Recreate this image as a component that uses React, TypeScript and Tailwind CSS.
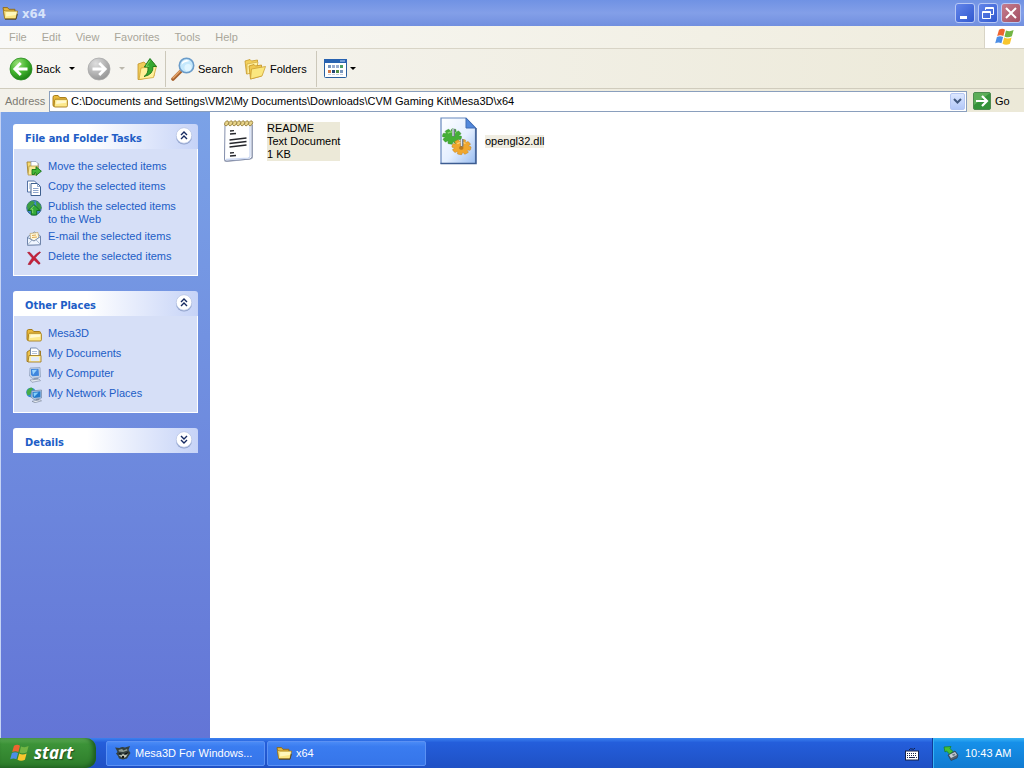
import { useState } from "react";
import type { ReactNode } from "react";

type IconProps = { className?: string };

function FolderIcon({ className = "size-4" }: IconProps) {
  return (
    <svg viewBox="0 0 16 16" className={className} aria-hidden="true">
      <path d="M1 4.5Q1 2.5 2.5 2.5h3.6l1.6 2h5.6q1.2 0 1.2 1.2v7.8H2.4Q1 13.5 1 12z" fill="#e9b93c" stroke="#a0740f" strokeWidth=".9" />
      <path d="M2.600 7.200q.2-1 1.200-1h10.600q1 0 1 1v5.600q0 1.200-1.200 1.200H3q-1 0-.9-1z" fill="#fde98c" stroke="#a87e1b" strokeWidth=".9" />
      <path d="M4 11l.6-3.600h9.600v2.400z" fill="#fff9d2" />
    </svg>
  );
}

function OpenFolderIcon({ className = "size-4" }: IconProps) {
  return (
    <svg viewBox="0 0 16 16" className={className} aria-hidden="true">
      <path d="M1 2.6h4.6l1.300 1.700h6v8.900H2.700z" fill="#e6b83e" stroke="#8a6516" strokeWidth=".9" />
      <path d="M3.800 6h11.800l-1.600 7.700H2.700L1.600 5.200z" fill="#fbe685" stroke="#9a7420" strokeWidth=".7" />
      <path d="M4.200 7h10.400l-.7 3L4 11.500z" fill="#fff7bb" />
      <path d="M3 14.300h11l1.400-5.200" fill="none" stroke="#4d3c16" strokeWidth=".8" />
    </svg>
  );
}

function RoundArrow({ forward = false }: { forward?: boolean }) {
  const id = forward ? "fwd" : "bck";
  return (
    <svg viewBox="0 0 24 24" className="size-6 shrink-0" aria-hidden="true">
      <defs>
        <radialGradient id={id} cx=".35" cy=".25" r=".85">
          <stop offset="0" stopColor={forward ? "#dedede" : "#9be079"} />
          <stop offset=".5" stopColor={forward ? "#b7b7b7" : "#43b52e"} />
          <stop offset="1" stopColor={forward ? "#8e8e8e" : "#147710"} />
        </radialGradient>
      </defs>
      <circle cx="12" cy="12" r="11" fill={`url(#${id})`} stroke={forward ? "#aaa" : "#2a8b21"} strokeWidth=".8" />
      <path
        d={forward ? "M5.5 12h12M12.2 6l6 6-6 6" : "M18.5 12h-12M11.8 6l-6 6 6 6"}
        fill="none"
        stroke="#fff"
        strokeWidth="2.8"
      />
    </svg>
  );
}

function UpFolderIcon() {
  return (
    <svg viewBox="0 0 22 24" className="h-6 w-[22px]" aria-hidden="true">
      <path d="M2 7l6-2 2 2 8-1v13L4 22.5H2z" fill="#f0cc5a" stroke="#c2922a" strokeWidth=".8" />
      <path d="M5 11l15.500-2-3 11.500L3 22.500z" fill="#fff09a" stroke="#cfa438" strokeWidth=".8" />
      <path d="M8 19.500q4.500-2.500 4-9.500H8.300L14 1.500l6.500 8H17q.5 8-9 10z" fill="#37a831" stroke="#187518" strokeWidth=".9" />
      <path d="M14 3.500l-4 5.700h3.200" fill="none" stroke="#87dc6a" strokeWidth=".9" />
    </svg>
  );
}

function SearchIcon() {
  return (
    <svg viewBox="0 0 24 24" className="size-6" aria-hidden="true">
      <path d="M2 22l8-8" stroke="#a8622e" strokeWidth="3.600" strokeLinecap="round" />
      <path d="M2 21l7.500-7.500" stroke="#e6a66c" strokeWidth="1.500" strokeLinecap="round" />
      <circle cx="15.500" cy="8.500" r="7.200" fill="#c5e8fc" stroke="#6b9cc9" strokeWidth="1.600" />
      <path d="M10.500 8a5 5 0 0 1 8-4Q12 5 10.500 8z" fill="#fff" />
      <circle cx="17" cy="10.500" r="3.500" fill="#e1f5ff" />
    </svg>
  );
}

function FoldersIcon() {
  return (
    <svg viewBox="0 0 22 22" className="size-[22px]" aria-hidden="true">
      <path d="M1 3l5-1.500 1.500 1.500 6-1V13L2.500 16z" fill="#f3d05c" stroke="#c79a2b" strokeWidth=".8" />
      <path d="M3 6l11-2-2 10-9 2z" fill="#fff2a2" stroke="#d1a83d" strokeWidth=".7" />
      <path d="M5 8l5-1.500 1.500 1.500 6-1v11L6.500 21z" fill="#f0c850" stroke="#c39324" strokeWidth=".8" />
      <path d="M7.500 11L21.500 8.500l-3.500 9.500L6.500 21z" fill="#fbe77f" stroke="#cba033" strokeWidth=".8" />
    </svg>
  );
}

function ViewsIcon() {
  return (
    <svg viewBox="0 0 23 19" className="h-[19px] w-[23px]" aria-hidden="true">
      <rect x=".5" y=".5" width="22" height="18" rx="1" fill="#fff" stroke="#285f9f" />
      <path d="M0 0h23v4H0z" fill="#2862b0" />
      <path d="M16 1.500h5v1h-5z" fill="#b8d6ff" />
      <path d="M4 6h3v3H4zM16 11h3v3h-3z" fill="#7796bd" />
      <path d="M8 6h3v3H8zM12 6h3v3h-3z" fill="#9aacd0" />
      <path d="M16 6h3v3h-3z" fill="#4c9f65" />
      <path d="M4 11h3v3H4z" fill="#d47a49" />
      <path d="M8 11h3v3H8z" fill="#264776" />
      <path d="M12 11h3v3h-3z" fill="#538d47" />
      <path d="M4 15.500h3M8 15.500h3M12 15.500h3M16 15.500h3" stroke="#c5cddb" />
    </svg>
  );
}

function WindowsFlag({ className = "size-5" }: IconProps) {
  return (
    <svg viewBox="0 0 20 20" className={className} aria-hidden="true">
      <path d="M4 2.800q3.500-2 6 0L8.400 9q-3-1.700-6.200 0z" fill="#ee6430" />
      <path d="M11 3.400q3.500 1.800 7.600-.3l-1.700 6.200q-3.800 2-7.400.2z" fill="#72b544" />
      <path d="M1.900 10.100q3.200-1.700 6.200 0l-1.700 6.200q-2.800-1.800-6.200 0z" fill="#4c8ee6" />
      <path d="M9.200 10.600q3.600 1.800 7.400-.1l-1.700 6.300q-3.800 2-7.400 0z" fill="#f8c62e" />
    </svg>
  );
}

function MoveIcon() {
  return (
    <svg viewBox="0 0 16 16" className="size-4 shrink-0" aria-hidden="true">
      <path d="M1 2h5l1 1.500h5v10H2z" fill="#f6d96f" stroke="#a6852c" strokeWidth=".9" />
      <path d="M5 1.500h5l2 2v6H5z" fill="#fff" stroke="#8797b8" strokeWidth=".7" />
      <path d="M3 6h9l-1 9H2z" fill="#fae99a" stroke="#ad8c32" strokeWidth=".7" />
      <path d="M6 14.500V9.500h4V6.700l5.400 4.500-5.400 4.300v-2.600H8.500v1.600z" fill="#45b638" stroke="#16751a" strokeWidth=".9" />
    </svg>
  );
}

function CopyIcon() {
  return (
    <svg viewBox="0 0 16 16" className="size-4 shrink-0" aria-hidden="true">
      <path d="M1.500 1h7l2 2v9h-9z" fill="#fff" stroke="#5472a4" />
      <path d="M5 3.500h6.500l3 3v9H5z" fill="#fff" stroke="#3e608f" />
      <path d="M11.500 3.500v3h3M7 8.500h5.500M7 10.500h5.500M7 12.500h5.500M3 4h1M3 6h1M3 8h1" fill="none" stroke="#809bc5" strokeWidth=".9" />
    </svg>
  );
}

function PublishIcon() {
  return (
    <svg viewBox="0 0 16 16" className="size-4 shrink-0" aria-hidden="true">
      <circle cx="8" cy="7.800" r="7.300" fill="#4389cf" stroke="#275a79" strokeWidth=".8" />
      <path d="M1 6q1-4 5-5l3 1-2 3-2 1-1 4-2 1zM10 1l4 3 1.500 4-3 3-2-4z" fill="#3c9e42" />
      <path d="M8 4.500l6 6h-3.300V15H5.300v-4.500H2z" fill="#35aa38" stroke="#126c20" strokeWidth=".9" />
      <path d="M8 5.800L4.700 9h2V13" fill="none" stroke="#98dd73" strokeWidth=".8" />
    </svg>
  );
}

function MailIcon() {
  return (
    <svg viewBox="0 0 16 16" className="size-4 shrink-0" aria-hidden="true">
      <path d="M1.500 7l7-5 6 4v8.500l-13 .5z" fill="#d7e5f7" stroke="#758bad" strokeWidth=".9" />
      <path d="M4 3.500l8-1 1 8-8 1z" fill="#fff8dc" stroke="#c2a565" strokeWidth=".7" />
      <path d="M6 5.500l4-.5M6 7.500l5-.5" stroke="#e0ab52" />
      <path d="M1.500 7.500L8 11l6.500-4.500v8.300l-13 .4z" fill="#f0f6ff" stroke="#667da4" strokeWidth=".9" />
      <path d="M1.500 15L6 10M14.500 14.500L10 9.800" stroke="#91a4c3" strokeWidth=".8" />
    </svg>
  );
}

function DeleteIcon() {
  return (
    <svg viewBox="0 0 16 16" className="size-4 shrink-0" aria-hidden="true">
      <path d="M1.500 2.500q2-1 3 .5l3.300 3.700q2.500-3.400 6-5l.8.700q-2.700 2.200-5.200 5.400l4.700 5.200q.2 1.300-1.500 1.200L8 9.900q-2 2.600-3.700 4.800l-2.300-.3Q4 10.800 6.200 7.900z" fill="#c62039" stroke="#9d1730" strokeWidth=".5" />
    </svg>
  );
}

function DocumentsIcon() {
  return (
    <svg viewBox="0 0 16 16" className="size-4 shrink-0" aria-hidden="true">
      <path d="M1 5l3-2h3l1 1h6.500v10.500H1z" fill="#edc14c" stroke="#9b741b" strokeWidth=".9" />
      <path d="M4.500 1h6l2.500 2.500V12H4.500z" fill="#fff" stroke="#6d83a8" strokeWidth=".9" />
      <path d="M6 4.500h5M6 6.500h5" stroke="#9baecb" strokeWidth=".8" />
      <path d="M3 8.500h12v6.500H2z" fill="#fff1a8" stroke="#a47d23" strokeWidth=".9" />
      <path d="M5 10h8v4H5z" fill="#e5ecf8" />
    </svg>
  );
}

function ComputerIcon() {
  return (
    <svg viewBox="0 0 16 16" className="size-4 shrink-0" aria-hidden="true">
      <path d="M4 1l10-.5.5 9.500-8 1.500L3.500 9z" fill="#c6d4e7" stroke="#899bb9" strokeWidth=".7" />
      <path d="M5 2l7.500-.3.500 7-6.500.5L5 7.800z" fill="#3f86dd" />
      <path d="M6 3l5-.2-4 5z" fill="#9ad4ff" />
      <path d="M8 11h4l1 2H7z" fill="#8c9bb0" />
      <path d="M4 13l9-1 1.500 1.700L6 15.300z" fill="#e5eaf1" stroke="#8894aa" strokeWidth=".7" />
    </svg>
  );
}

function NetworkIcon() {
  return (
    <svg viewBox="0 0 16 16" className="size-4 shrink-0" aria-hidden="true">
      <circle cx="5" cy="5.500" r="4.800" fill="#338bd4" />
      <path d="M.5 5q1-4 5-4.500l2 2-2 1-1 4-3 1z" fill="#46ac49" />
      <path d="M5.500 4l10-1v8L8 12.500 5 10z" fill="#becee3" stroke="#6f86a8" strokeWidth=".7" />
      <path d="M6.500 5l8-.7v6L8 11l-1.500-1.500z" fill="#2278cb" />
      <path d="M7.500 5.800l5-.4-4.500 4.500z" fill="#83d0fa" />
      <path d="M10 12h3l.5 1-4 .5z" fill="#7d8da4" />
      <path d="M6 14.300l8-1.500 1.500 1L9 15.700z" fill="#f2f4f8" stroke="#7c899d" strokeWidth=".7" />
    </svg>
  );
}

function NotepadIcon() {
  return (
    <svg viewBox="0 0 32 44" className="h-11 w-8" aria-hidden="true">
      <path d="M3 6h27v32q0 2-3 2.500L4 43q-3 .3-3-2z" fill="#a9aebb" />
      <path d="M2 4.500h27v33q0 2.200-2.500 2.600L4 42q-2.700.3-2.500-2z" fill="#fff" stroke="#8590ad" strokeWidth="1" />
      <path d="M27 6v31q0 2-2 2.200L3 40.500" fill="none" stroke="#cdd9f3" strokeWidth="1.300" />
      {[4, 8, 12, 16, 20, 24, 28].map((x) => (
        <path key={x} d={`M${x - 1} 7q-2.500-1-1-3.500t3-1.500q1.500 1.500 0 3.500z`} fill="#e8d48a" stroke="#96803c" strokeWidth=".9" />
      ))}
      <path d="M7 12l4-.3M7 15l6-.5M6.500 21l17-2M6.500 24.500l17-2M6.500 28l17-2M7 34l4-.3M7 37l6-.5" stroke="#26272c" strokeWidth="1.300" />
    </svg>
  );
}

const gearTeeth = [0, 45, 90, 135, 180, 225, 270, 315];

function DllIcon() {
  return (
    <svg viewBox="0 0 38 48" className="h-12 w-[38px]" aria-hidden="true">
      <defs>
        <linearGradient id="sheet" x1="0" y1="0" x2="1" y2="1">
          <stop stopColor="#fff" />
          <stop offset=".55" stopColor="#e4efff" />
          <stop offset="1" stopColor="#9abdf0" />
        </linearGradient>
      </defs>
      <path d="M2 1h25l9.500 10v35.500H2z" fill="url(#sheet)" stroke="#6687bd" strokeWidth="1.200" />
      <path d="M1.500 46.500h35.500V11" fill="none" stroke="#3c5c91" strokeWidth="1.500" />
      <path d="M27 1v10h9.500z" fill="#5288dc" stroke="#416db3" />
      <g transform="translate(13 19.500) scale(1 .8) rotate(12)" fill="#45af36" stroke="#26801f" strokeWidth=".4">
        {gearTeeth.map((a) => (
          <rect key={a} x="-2.400" y="-9.500" width="4.800" height="5" rx="1" transform={`rotate(${a})`} />
        ))}
        <circle r="7.200" stroke="none" />
        <path d="M-5-3q3-4 8-2" fill="none" stroke="#8ad870" strokeWidth="1.600" />
      </g>
      <g transform="translate(22.500 30) scale(1 .8) rotate(12)" fill="#f0a72e" stroke="#b47313" strokeWidth=".4">
        {gearTeeth.map((a) => (
          <rect key={a} x="-2.400" y="-9.500" width="4.800" height="5" rx="1" transform={`rotate(${a})`} />
        ))}
        <circle r="7.200" stroke="none" />
        <path d="M-5-3q3-4 8-2" fill="none" stroke="#ffd276" strokeWidth="1.600" />
        <ellipse rx="2.200" ry="2.400" cy="1" fill="#b9781c" stroke="none" />
      </g>
      <path d="M14.500 12v7.500M23 22v7.500" stroke="#6d7884" strokeWidth="2.800" />
      <path d="M14 12v7M22.500 22v7" stroke="#dfe5ee" strokeWidth="1.200" />
    </svg>
  );
}

function RaccoonIcon() {
  return (
    <svg viewBox="0 0 16 16" className="size-4 shrink-0" aria-hidden="true">
      <path d="M1 4L0 2.500l4.500.5Q7 1.500 10 2.500L15 1l-1.500 4L15.500 8 12 13.500l-4 1-4-1L3 11 1 8.500 2.500 7z" fill="#33403f" />
      <path d="M3.500 5l3.500-1 1.500 1.500L12 4l.5 1.500L8 7 4 6.500z" fill="#8d9a93" />
      <path d="M3.500 10l3 .300 1.500-1.500 2 1.500 3-1.800-2 3.500-3 1.300z" fill="#c4c9bb" />
      <path d="M3.500 8l3 .5-1.500 1zM9.500 8.500l4-1.500-2 2.500z" fill="#0c0d10" />
      <circle cx="8" cy="12" r="1.200" fill="#111" />
    </svg>
  );
}

function KeyboardIcon() {
  return (
    <svg viewBox="0 0 14 14" className="size-3.5" aria-hidden="true">
      <path d="M4 3q1-2 3-1t3-1" fill="none" stroke="#10214e" />
      <rect x=".5" y="4" width="13" height="9" fill="#fff" stroke="#16234b" />
      <path d="M2 6.500h10M2 8.500h10" stroke="#16234b" strokeDasharray="1 1" />
      <path d="M2 10.500h1M4 10.500h6M11 10.500h1" stroke="#16234b" />
    </svg>
  );
}

function TrayDeviceIcon() {
  return (
    <svg viewBox="0 0 16 16" className="size-4" aria-hidden="true">
      <path d="M5 10l7-4 3 4-1 3-6 2.500z" fill="#53606e" stroke="#2e3d50" strokeWidth=".7" />
      <path d="M6 10l6-3 2 3-6 3z" fill="#c7ced4" />
      <path d="M9 9.500l2.500-1 1 1.500-2.500 1z" fill="#6d7d8a" />
      <path d="M1 2l7-.5-1 2 3 3-3.500 2.500-3-3L2 7z" fill="#46c034" stroke="#167d25" strokeWidth=".7" />
    </svg>
  );
}

function DownTriangle({ muted = false }: { muted?: boolean }) {
  return (
    <svg viewBox="0 0 6 3" className="h-[3px] w-1.5" aria-hidden="true">
      <path d="M0 0h6L3 3z" fill={muted ? "#bbb8ad" : "#000"} />
    </svg>
  );
}

function TaskPanel({ title, initiallyOpen = true, children }: { title: string; initiallyOpen?: boolean; children?: ReactNode }) {
  const [open, setOpen] = useState(initiallyOpen);
  return (
    <section>
      <button
        type="button"
        aria-expanded={open}
        onClick={() => setOpen(!open)}
        className="flex h-[25px] w-full items-center justify-between rounded-t-[3px] bg-linear-to-r from-white from-40% to-[#c6d3f7] pr-[5px] pl-3 font-['DejaVu_Sans_Condensed','Noto_Sans',sans-serif] font-bold text-[#215dc6]"
      >
        <span className="pt-[3px]">{title}</span>
        <svg viewBox="0 0 18 18" className="mb-0.5 size-[18px]" aria-hidden="true">
          <circle cx="9" cy="9.500" r="8" fill="#8d9fc9" />
          <circle cx="9" cy="8.500" r="7.800" fill="#fff" stroke="#bac7e6" strokeWidth=".8" />
          <path
            d={open ? "M6 8l3-3 3 3M6 12l3-3 3 3" : "M6 5l3 3 3-3M6 9l3 3 3-3"}
            fill="none"
            stroke="#162a61"
            strokeWidth="1.400"
          />
        </svg>
      </button>
      {open && (
        <ul className="flex flex-col gap-1 border border-t-0 border-white bg-[#d6dff7] px-3 pt-[11px] pb-[9px]">{children}</ul>
      )}
    </section>
  );
}

function TaskLink({ icon, children }: { icon: ReactNode; children: ReactNode }) {
  return (
    <li>
      <a href="#" className="flex min-h-4 items-start gap-[6px] text-[#215dc6] hover:underline">
        <span className="h-4 shrink-0">{icon}</span>
        <span>{children}</span>
      </a>
    </li>
  );
}

const menus = ["File", "Edit", "View", "Favorites", "Tools", "Help"];
const captionButton = "flex size-5 items-center justify-center rounded-[3px] border border-[#b7c8f5]";

export default function App() {
  return (
    <div className="flex min-h-screen flex-col bg-white font-['Liberation_Sans',Arial,sans-serif] text-[11px] leading-[13px] text-black">
      <header className="flex h-[26px] items-center justify-between bg-linear-to-b from-[#7092e4] via-[#839fe8] via-50% to-[#718fdf] pr-[3px] pl-0.5">
        <div className="flex items-center gap-1">
          <OpenFolderIcon />
          <h1 className="font-['DejaVu_Sans_Condensed','Noto_Sans',sans-serif] text-[13px] font-bold text-[#d7e3fa]">x64</h1>
        </div>
        <div className="flex gap-[3px]">
          <button type="button" aria-label="Minimize" className={`${captionButton} bg-linear-to-br from-[#6385ea] to-[#3158cf]`}>
            <svg viewBox="0 0 18 18" className="size-[18px]" aria-hidden="true"><path d="M4 12h7v3H4z" fill="#fff" /></svg>
          </button>
          <button type="button" aria-label="Restore" className={`${captionButton} bg-linear-to-br from-[#6385ea] to-[#3158cf]`}>
            <svg viewBox="0 0 18 18" className="size-[18px]" aria-hidden="true" fill="none" stroke="#fff">
              <path d="M6.500 6V3.500h8v7H12M6 4.500h9" />
              <path d="M3.500 7.500h8v7h-8zM3 8.500h9" />
            </svg>
          </button>
          <button type="button" aria-label="Close" className={`${captionButton} bg-linear-to-br from-[#c47d8e] to-[#a44f63]`}>
            <svg viewBox="0 0 18 18" className="size-[18px]" aria-hidden="true"><path d="M4 4l10 10M14 4L4 14" stroke="#fff" strokeWidth="2" /></svg>
          </button>
        </div>
      </header>

      <div className="flex h-[23px] items-stretch justify-between border-b border-[#d8d4c6] bg-linear-to-r from-[#f9f9f7] to-[#efecdd]">
        <nav className="flex items-center gap-[15px] pl-[9px]" aria-label="Menu">
          {menus.map((m) => (
            <button key={m} type="button" className="text-[#a9a69a]">{m}</button>
          ))}
        </nav>
        <div className="flex w-10 items-center justify-center border-l border-[#d8d4c6] bg-white">
          <WindowsFlag />
        </div>
      </div>

      <div className="flex h-10 items-center border-b border-[#d0ccbd] bg-linear-to-r from-[#f7f6f3] to-[#ece9d8]">
        <button type="button" className="flex items-center gap-[3px] pl-[9px] text-left">
          <RoundArrow />
          <span className="w-6 pt-px">Back</span>
        </button>
        <button type="button" aria-label="Back history" className="flex w-6 justify-center"><DownTriangle /></button>
        <button type="button" aria-label="Forward" className="pl-[3px]"><RoundArrow forward /></button>
        <button type="button" aria-label="Forward history" className="flex w-[22px] justify-center"><DownTriangle muted /></button>
        <button type="button" aria-label="Up" className="px-[3px]"><UpFolderIcon /></button>
        <div className="ml-1 h-9 border-l border-[#ccc8ba]" />
        <button type="button" className="flex items-center gap-[3px] pl-[5px] text-left">
          <SearchIcon />
          <span className="w-[34px] pt-px">Search</span>
        </button>
        <button type="button" className="flex items-center gap-1 pl-3 text-left">
          <FoldersIcon />
          <span className="w-9 pt-px">Folders</span>
        </button>
        <div className="ml-[10px] h-9 border-l border-[#ccc8ba]" />
        <button type="button" aria-label="Views" className="flex items-center gap-[3px] pl-[7px]">
          <ViewsIcon />
          <DownTriangle />
        </button>
      </div>

      <div className="flex h-[23px] items-center bg-linear-to-r from-[#f3f1ea] to-[#ece9d8] pt-px pl-[5px]">
        <label htmlFor="address" className="w-11 text-[#7d7b72]">Address</label>
        <div className="flex h-[21px] flex-1 items-center border border-[#8a9fbd] bg-white pl-0.5">
          <FolderIcon />
          <input
            id="address"
            className="h-[19px] min-w-0 flex-1 pl-[3px] outline-none"
            defaultValue={"C:\\Documents and Settings\\VM2\\My Documents\\Downloads\\CVM Gaming Kit\\Mesa3D\\x64"}
          />
          <button type="button" aria-label="Address list" className="mr-px flex h-[17px] w-[15px] items-center justify-center rounded-xs border border-[#b5c7f3] bg-linear-to-b from-[#dce7ff] to-[#b3c8f8]">
            <svg viewBox="0 0 9 6" className="h-1.5 w-[9px]" aria-hidden="true"><path d="M1 1l3.500 3.500L8 1" fill="none" stroke="#42597f" strokeWidth="2" /></svg>
          </button>
        </div>
        <button type="button" className="flex w-[57px] items-center gap-1 pl-[6px]">
          <svg viewBox="0 0 18 18" className="size-[18px]" aria-hidden="true">
            <rect x=".5" y=".5" width="17" height="17" rx="1.500" fill="#34923a" stroke="#4d8b50" />
            <path d="M1 1h16L1 13z" fill="#5cae59" />
            <path d="M3 9h11M9 4l5 5-5 5" fill="none" stroke="#fff" strokeWidth="2.200" />
          </svg>
          <span>Go</span>
        </button>
      </div>

      <div className="flex flex-1">
        <aside className="flex w-[210px] shrink-0 flex-col gap-[15px] border-l border-[#c5d3f4] bg-linear-to-b from-[#7ba2e7] to-[#6375d6] p-3">
          <TaskPanel title="File and Folder Tasks">
            <TaskLink icon={<MoveIcon />}>Move the selected items</TaskLink>
            <TaskLink icon={<CopyIcon />}>Copy the selected items</TaskLink>
            <TaskLink icon={<PublishIcon />}>Publish the selected items<br />to the Web</TaskLink>
            <TaskLink icon={<MailIcon />}>E-mail the selected items</TaskLink>
            <TaskLink icon={<DeleteIcon />}>Delete the selected items</TaskLink>
          </TaskPanel>
          <TaskPanel title="Other Places">
            <TaskLink icon={<FolderIcon />}>Mesa3D</TaskLink>
            <TaskLink icon={<DocumentsIcon />}>My Documents</TaskLink>
            <TaskLink icon={<ComputerIcon />}>My Computer</TaskLink>
            <TaskLink icon={<NetworkIcon />}>My Network Places</TaskLink>
          </TaskPanel>
          <TaskPanel title="Details" initiallyOpen={false} />
        </aside>

        <main className="flex flex-1 flex-wrap content-start items-start pt-[5px] pl-[13px]">
          <button type="button" className="flex h-12 w-[216px] items-center gap-3 text-left">
            <NotepadIcon />
            <span className="bg-[#ece9d8]">README<br />Text Document<br />1 KB</span>
          </button>
          <button type="button" className="flex h-12 w-[216px] items-center gap-2 text-left">
            <DllIcon />
            <span className="bg-[#f0ede2]">opengl32.dll</span>
          </button>
        </main>
      </div>

      <footer className="flex h-[30px] items-stretch bg-linear-to-b from-[#3c81f0] via-[#245edb] via-15% to-[#1f50c4] text-white">
        <button type="button" className="flex w-24 items-center gap-1 rounded-r-[10px] bg-linear-to-b from-[#5caa56] via-[#3c9338] via-20% to-[#2d7c2a] pl-[10px] shadow-[inset_-3px_-1px_4px_#1d5b20]">
          <WindowsFlag />
          <span className="font-['Open_Sans',sans-serif] text-[17px] leading-5 font-bold italic [text-shadow:1px_1px_1px_#204d20]">start</span>
        </button>
        <div className="flex flex-1 items-center gap-0.5 pl-[10px]">
          <button type="button" className="flex h-[25px] w-[159px] items-center gap-1 rounded-xs border border-[#5b91f4] bg-linear-to-b from-[#4a8bf6] via-[#3a7cf0] via-20% to-[#3675e9] pl-2">
            <RaccoonIcon />
            <span className="truncate">Mesa3D For Windows...</span>
          </button>
          <button type="button" className="flex h-[25px] w-[159px] items-center gap-1 rounded-xs border border-[#5b91f4] bg-linear-to-b from-[#4a8bf6] via-[#3a7cf0] via-20% to-[#3675e9] pl-2">
            <OpenFolderIcon />
            <span>x64</span>
          </button>
        </div>
        <button type="button" aria-label="Keyboard" className="flex w-[27px] items-center pt-0.5"><KeyboardIcon /></button>
        <div className="flex w-[92px] items-center gap-[6px] border-l border-[#113b98] bg-linear-to-b from-[#36b2f5] via-[#1690e9] via-15% to-[#117bd1] pl-[10px] shadow-[inset_1px_0_0_#37b5f5]">
          <TrayDeviceIcon />
          <time>10:43 AM</time>
        </div>
      </footer>
    </div>
  );
}
